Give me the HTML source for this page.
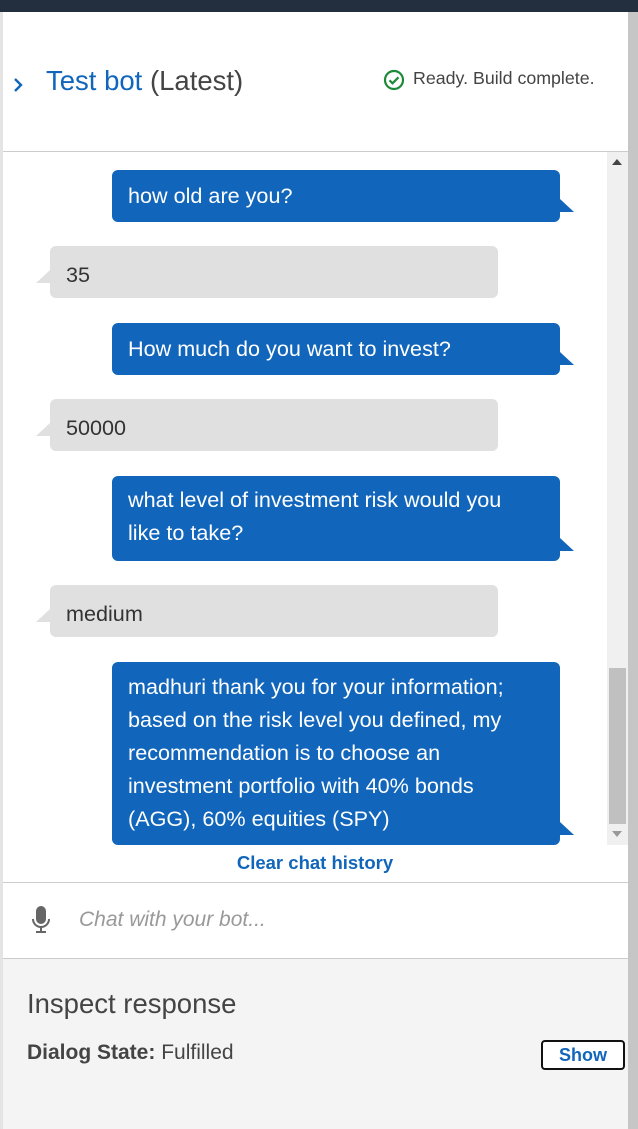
<!DOCTYPE html>
<html><head><meta charset="utf-8"><style>
*{margin:0;padding:0;box-sizing:border-box}
body{width:638px;height:1129px;background:#fff;font-family:"Liberation Sans",Arial,sans-serif;position:relative;overflow:hidden}
.a{position:absolute}
.b{position:absolute;background:#1166bb;color:#fff;border-radius:6px;font-size:21.6px;line-height:33px;padding:9px 16px;white-space:nowrap}
.b:after{content:"";position:absolute;right:-14px;bottom:10px;border-left:14px solid #1166bb;border-top:13px solid transparent}
.g{position:absolute;background:#e0e0e0;color:#333;border-radius:6px;font-size:21.6px;line-height:33px;padding:12px 16px;left:50px;width:448px;height:52px}
.g:after{content:"";position:absolute;left:-14px;bottom:15px;border-right:14px solid #e0e0e0;border-top:13px solid transparent}
</style></head><body>
<div class="a" style="left:0;top:0;width:638px;height:12px;background:#232f3e"></div>
<div class="a" style="left:0;top:12px;width:3px;height:1117px;background:#e4e4e4"></div>
<div class="a" style="left:628px;top:12px;width:10px;height:1117px;background:#c6c6c6"></div>
<svg class="a" style="left:13px;top:77px" width="12" height="16" viewBox="0 0 12 16"><path d="M2 2l6 6-6 6" fill="none" stroke="#1166bb" stroke-width="2.4"/></svg>
<div class="a" style="left:46px;top:65px;font-size:27.5px;color:#1166bb">Test bot <span style="color:#444">(Latest)</span></div>
<svg class="a" style="left:383px;top:69px" width="22" height="22" viewBox="0 0 22 22"><circle cx="11" cy="11" r="9" fill="none" stroke="#1d8a3a" stroke-width="2.2"/><path d="M6.5 11.3l3 3 6-6" fill="none" stroke="#1d8a3a" stroke-width="2.2"/></svg>
<div class="a" style="left:413px;top:68px;font-size:17.8px;color:#444">Ready. Build complete.</div>
<div class="a" style="left:3px;top:151px;width:625px;height:1px;background:#ccc"></div>
<div class="a" style="left:607px;top:152px;width:21px;height:693px;background:#f0f0f0"></div>
<div class="a" style="left:609px;top:668px;width:17px;height:156px;background:#c0c0c0"></div>
<div class="a" style="left:612px;top:159px;border-left:5px solid transparent;border-right:5px solid transparent;border-bottom:6px solid #444"></div>
<div class="a" style="left:612px;top:831px;border-left:5px solid transparent;border-right:5px solid transparent;border-top:6px solid #999"></div>
<div class="b" style="left:112px;top:170px;width:448px;height:52px">how old are you?</div>
<div class="g" style="top:246px">35</div>
<div class="b" style="left:112px;top:323px;width:448px;height:52px">How much do you want to invest?</div>
<div class="g" style="top:399px">50000</div>
<div class="b" style="left:112px;top:476px;width:448px;height:85px;padding-top:7px">what level of investment risk would you<br>like to take?</div>
<div class="g" style="top:585px">medium</div>
<div class="b" style="left:112px;top:662px;width:448px;height:183px;padding-top:8px">madhuri thank you for your information;<br>based on the risk level you defined, my<br>recommendation is to choose an<br>investment portfolio with 40% bonds<br>(AGG), 60% equities (SPY)</div>
<div class="a" style="left:0;top:852px;width:630px;text-align:center;font-size:18.5px;font-weight:bold;color:#1166bb">Clear chat history</div>
<div class="a" style="left:3px;top:882px;width:625px;height:1px;background:#ccc"></div>
<svg class="a" style="left:30px;top:905px" width="22" height="30" viewBox="0 0 22 30"><rect x="6" y="1" width="10" height="18" rx="5" fill="#666"/><path d="M3 14a8 8 0 0 0 16 0" fill="none" stroke="#666" stroke-width="2"/><path d="M11 22v5M6 27h10" stroke="#666" stroke-width="2"/></svg>
<div class="a" style="left:79px;top:908px;font-size:21px;font-style:italic;color:#999">Chat with your bot...</div>
<div class="a" style="left:3px;top:958px;width:625px;height:1px;background:#ccc"></div>
<div class="a" style="left:3px;top:959px;width:625px;height:170px;background:#f4f4f4"></div>
<div class="a" style="left:27px;top:988px;font-size:27.5px;color:#444">Inspect response</div>
<div class="a" style="left:27px;top:1041px;font-size:21px;color:#444"><b>Dialog State:</b> Fulfilled</div>
<div class="a" style="left:541px;top:1040px;width:84px;height:30px;border:2px solid #111;border-radius:4px;background:#fff;text-align:center;font-size:18px;font-weight:bold;color:#1166bb;line-height:26px">Show</div>
</body></html>
